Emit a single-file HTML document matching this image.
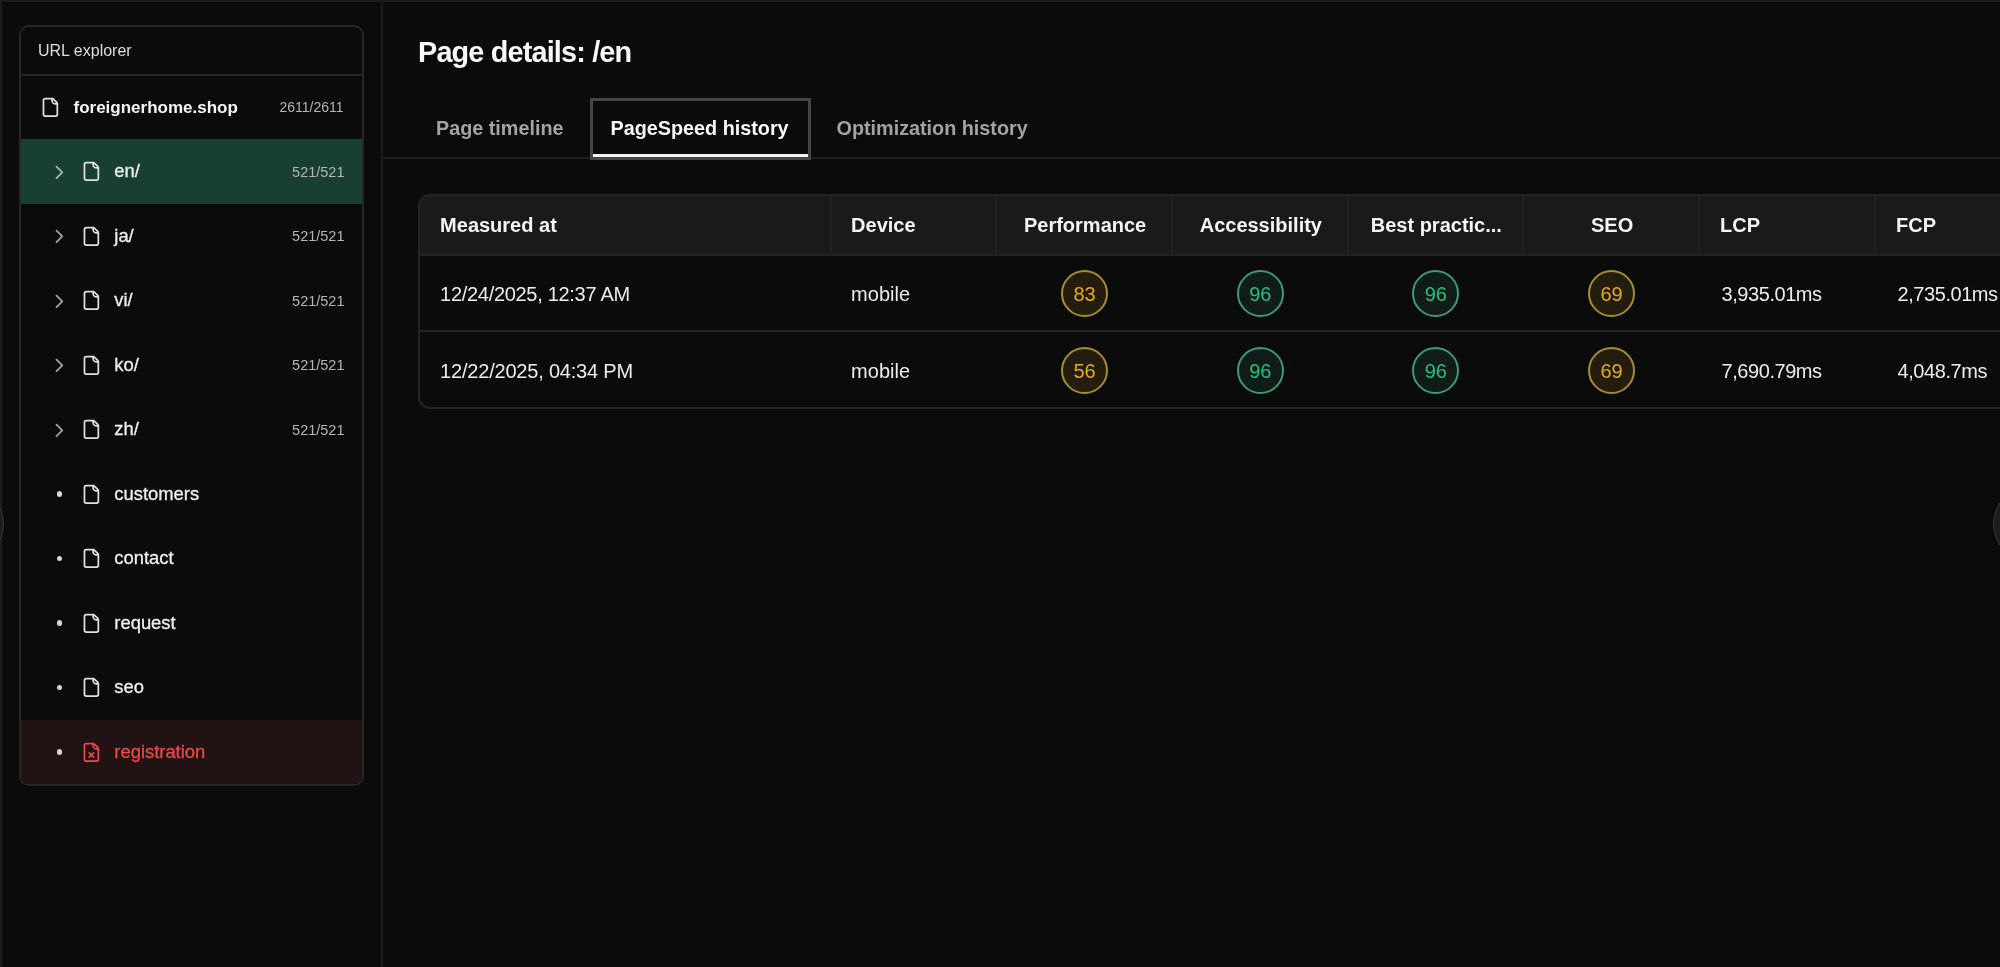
<!DOCTYPE html><html><head><meta charset="utf-8"><style>*{box-sizing:border-box;margin:0;padding:0}
html,body{width:2000px;height:967px;overflow:hidden;background:#0b0b0b}
body{position:relative;font-family:"Liberation Sans",sans-serif;color:#f2f2f2}
.abs{position:absolute}
.bt{left:0;top:0;width:2000px;height:2px;background:#1c1c1c}
.bl{left:0;top:0;width:2px;height:967px;background:#1c1c1c}
.sd{left:381px;top:0;width:2px;height:967px;background:#1c1c1c}
.panel{left:19px;top:25px;width:345px;height:761px;border:2px solid #232323;border-radius:10px;overflow:hidden}
.ph{position:absolute;left:0;top:0;width:100%;height:49px;border-bottom:2px solid #232323}
.ph span{position:absolute;left:17px;top:15.3px;font-size:16px;line-height:18px;color:#dedede}
.row{position:absolute;left:0;width:100%;height:64.5px}
.root{top:49px;height:63px}
.row .chev{position:absolute;left:26.5px;top:50%;margin-top:-10.6px;width:22.8px;height:22.8px}
.row .dot{position:absolute;left:35.7px;top:50%;margin-top:-2.7px;width:5.4px;height:5.4px;border-radius:50%;background:#d6d6d6}
.row .ic{position:absolute;left:60px;top:50%;margin-top:-10px;width:20.8px;height:20.8px}
.root .ic{left:19px;margin-top:-11px}
.row .lb{position:absolute;left:93.3px;top:50%;margin-top:-10.9px;font-size:18.4px;-webkit-text-stroke:0.3px currentColor;line-height:22px;color:#f0f0f0;white-space:nowrap}
.root .lb{left:52.5px;margin-top:-10.5px;font-size:17px;font-weight:700;color:#f7f7f7;-webkit-text-stroke:0}
.row .ct{position:absolute;right:17.5px;top:50%;margin-top:-8.8px;font-size:14.5px;line-height:18px;color:#b4b4b4}
.green{background:#183f2f}
.red{background:#211314}
.red .lb{color:#ea4848}
h1{position:absolute;left:418px;top:35.5px;font-size:28.8px;line-height:32px;font-weight:700;color:#fafafa;letter-spacing:-0.82px;white-space:nowrap}
.tabline{left:383px;top:157px;width:1617px;height:1.6px;background:#1f1f1f}
.tab{position:absolute;top:117px;font-size:19.8px;line-height:22px;font-weight:700;color:#a3a3a3;white-space:nowrap}
.tab.act{color:#fafafa}
.tabbox{left:590px;top:98.3px;width:220.5px;height:61.7px;border:3px solid #464646}
.tabul{left:593px;top:153.8px;width:214.5px;height:3.6px;background:#f5f5f5}
.tbl{left:418px;top:194px;width:1700px;height:215px;border:2px solid #242424;border-radius:12px;overflow:hidden}
.th{position:absolute;left:0;top:0;width:100%;height:60px;background:#1a1a1a;border-bottom:2px solid #242424}
.vl{position:absolute;top:0;width:2px;height:58px;background:#222}
.hc{position:absolute;top:18.1px;font-size:20px;line-height:22px;font-weight:700;color:#f5f5f5;white-space:nowrap}
.rl{position:absolute;left:0;width:100%;height:2px;background:#242424}
.cell{position:absolute;font-size:20px;line-height:22px;color:#ececec;white-space:nowrap}
.sc{position:absolute;width:47px;height:47px;border-radius:50%;border:2.2px solid;font-size:20px;line-height:44px;text-align:center}
.y{border-color:#a38e2c;background:#241d0d;color:#e3ab12}
.g{border-color:#3d9a77;background:#0f1c17;color:#22bf84}
.circ{width:76px;height:76px;border-radius:50%;background:#1c1d21;border:1.5px solid #3a3a3a;top:486px}

.root .ct{font-size:14px;right:18.5px;margin-top:-9.3px}
.panel{border-color:#262626}
.ph{border-bottom-color:#262626}

#wrap{position:absolute;left:0;top:0;width:2000px;height:967px;overflow:hidden;will-change:transform}

</style></head><body><div id="wrap">
<div class="abs bt"></div><div class="abs bl"></div><div class="abs sd"></div>
<div class="abs circ" style="left:-72px"></div><div class="abs circ" style="left:1993px"></div>
<div class="abs panel"><div class="ph"><span>URL explorer</span></div>
<div class="row root"><svg class="ic"  viewBox="0 0 24 24" fill="none" stroke="#e2e2e2" stroke-width="2" stroke-linecap="round" stroke-linejoin="round"><path d="M6 22a2 2 0 0 1-2-2V4a2 2 0 0 1 2-2h8a2.4 2.4 0 0 1 1.704.706l3.588 3.588A2.4 2.4 0 0 1 20 8v12a2 2 0 0 1-2 2z"/><path d="M14 2v2a4 4 0 0 0 4 4h2"/></svg><span class="lb">foreignerhome.shop</span><span class="ct">2611/2611</span></div>
<div class="row green" style="top:112.1px"><svg class="chev"  viewBox="0 0 24 24" fill="none" stroke="#a9b2ae" stroke-width="2" stroke-linecap="round" stroke-linejoin="round"><path d="m9 18 6-6-6-6"/></svg><svg class="ic"  viewBox="0 0 24 24" fill="none" stroke="#e2e2e2" stroke-width="2" stroke-linecap="round" stroke-linejoin="round"><path d="M6 22a2 2 0 0 1-2-2V4a2 2 0 0 1 2-2h8a2.4 2.4 0 0 1 1.704.706l3.588 3.588A2.4 2.4 0 0 1 20 8v12a2 2 0 0 1-2 2z"/><path d="M14 2v2a4 4 0 0 0 4 4h2"/></svg><span class="lb">en/</span><span class="ct">521/521</span></div>
<div class="row " style="top:176.6px"><svg class="chev"  viewBox="0 0 24 24" fill="none" stroke="#a0a0a0" stroke-width="2" stroke-linecap="round" stroke-linejoin="round"><path d="m9 18 6-6-6-6"/></svg><svg class="ic"  viewBox="0 0 24 24" fill="none" stroke="#e2e2e2" stroke-width="2" stroke-linecap="round" stroke-linejoin="round"><path d="M6 22a2 2 0 0 1-2-2V4a2 2 0 0 1 2-2h8a2.4 2.4 0 0 1 1.704.706l3.588 3.588A2.4 2.4 0 0 1 20 8v12a2 2 0 0 1-2 2z"/><path d="M14 2v2a4 4 0 0 0 4 4h2"/></svg><span class="lb">ja/</span><span class="ct">521/521</span></div>
<div class="row " style="top:241.1px"><svg class="chev"  viewBox="0 0 24 24" fill="none" stroke="#a0a0a0" stroke-width="2" stroke-linecap="round" stroke-linejoin="round"><path d="m9 18 6-6-6-6"/></svg><svg class="ic"  viewBox="0 0 24 24" fill="none" stroke="#e2e2e2" stroke-width="2" stroke-linecap="round" stroke-linejoin="round"><path d="M6 22a2 2 0 0 1-2-2V4a2 2 0 0 1 2-2h8a2.4 2.4 0 0 1 1.704.706l3.588 3.588A2.4 2.4 0 0 1 20 8v12a2 2 0 0 1-2 2z"/><path d="M14 2v2a4 4 0 0 0 4 4h2"/></svg><span class="lb">vi/</span><span class="ct">521/521</span></div>
<div class="row " style="top:305.6px"><svg class="chev"  viewBox="0 0 24 24" fill="none" stroke="#a0a0a0" stroke-width="2" stroke-linecap="round" stroke-linejoin="round"><path d="m9 18 6-6-6-6"/></svg><svg class="ic"  viewBox="0 0 24 24" fill="none" stroke="#e2e2e2" stroke-width="2" stroke-linecap="round" stroke-linejoin="round"><path d="M6 22a2 2 0 0 1-2-2V4a2 2 0 0 1 2-2h8a2.4 2.4 0 0 1 1.704.706l3.588 3.588A2.4 2.4 0 0 1 20 8v12a2 2 0 0 1-2 2z"/><path d="M14 2v2a4 4 0 0 0 4 4h2"/></svg><span class="lb">ko/</span><span class="ct">521/521</span></div>
<div class="row " style="top:370.1px"><svg class="chev"  viewBox="0 0 24 24" fill="none" stroke="#a0a0a0" stroke-width="2" stroke-linecap="round" stroke-linejoin="round"><path d="m9 18 6-6-6-6"/></svg><svg class="ic"  viewBox="0 0 24 24" fill="none" stroke="#e2e2e2" stroke-width="2" stroke-linecap="round" stroke-linejoin="round"><path d="M6 22a2 2 0 0 1-2-2V4a2 2 0 0 1 2-2h8a2.4 2.4 0 0 1 1.704.706l3.588 3.588A2.4 2.4 0 0 1 20 8v12a2 2 0 0 1-2 2z"/><path d="M14 2v2a4 4 0 0 0 4 4h2"/></svg><span class="lb">zh/</span><span class="ct">521/521</span></div>
<div class="row " style="top:434.6px"><span class="dot"></span><svg class="ic"  viewBox="0 0 24 24" fill="none" stroke="#e2e2e2" stroke-width="2" stroke-linecap="round" stroke-linejoin="round"><path d="M6 22a2 2 0 0 1-2-2V4a2 2 0 0 1 2-2h8a2.4 2.4 0 0 1 1.704.706l3.588 3.588A2.4 2.4 0 0 1 20 8v12a2 2 0 0 1-2 2z"/><path d="M14 2v2a4 4 0 0 0 4 4h2"/></svg><span class="lb">customers</span></div>
<div class="row " style="top:499.1px"><span class="dot"></span><svg class="ic"  viewBox="0 0 24 24" fill="none" stroke="#e2e2e2" stroke-width="2" stroke-linecap="round" stroke-linejoin="round"><path d="M6 22a2 2 0 0 1-2-2V4a2 2 0 0 1 2-2h8a2.4 2.4 0 0 1 1.704.706l3.588 3.588A2.4 2.4 0 0 1 20 8v12a2 2 0 0 1-2 2z"/><path d="M14 2v2a4 4 0 0 0 4 4h2"/></svg><span class="lb">contact</span></div>
<div class="row " style="top:563.6px"><span class="dot"></span><svg class="ic"  viewBox="0 0 24 24" fill="none" stroke="#e2e2e2" stroke-width="2" stroke-linecap="round" stroke-linejoin="round"><path d="M6 22a2 2 0 0 1-2-2V4a2 2 0 0 1 2-2h8a2.4 2.4 0 0 1 1.704.706l3.588 3.588A2.4 2.4 0 0 1 20 8v12a2 2 0 0 1-2 2z"/><path d="M14 2v2a4 4 0 0 0 4 4h2"/></svg><span class="lb">request</span></div>
<div class="row " style="top:628.1px"><span class="dot"></span><svg class="ic"  viewBox="0 0 24 24" fill="none" stroke="#e2e2e2" stroke-width="2" stroke-linecap="round" stroke-linejoin="round"><path d="M6 22a2 2 0 0 1-2-2V4a2 2 0 0 1 2-2h8a2.4 2.4 0 0 1 1.704.706l3.588 3.588A2.4 2.4 0 0 1 20 8v12a2 2 0 0 1-2 2z"/><path d="M14 2v2a4 4 0 0 0 4 4h2"/></svg><span class="lb">seo</span></div>
<div class="row red" style="top:692.6px"><span class="dot"></span><svg class="ic"  viewBox="0 0 24 24" fill="none" stroke="#ea4848" stroke-width="2" stroke-linecap="round" stroke-linejoin="round"><path d="M6 22a2 2 0 0 1-2-2V4a2 2 0 0 1 2-2h8a2.4 2.4 0 0 1 1.704.706l3.588 3.588A2.4 2.4 0 0 1 20 8v12a2 2 0 0 1-2 2z"/><path d="M14 2v2a4 4 0 0 0 4 4h2"/><path d="m14.5 12.5-5 5"/><path d="m9.5 12.5 5 5"/></svg><span class="lb">registration</span></div>
</div>
<h1>Page details: /en</h1><div class="abs tabline"></div>
<span class="tab" style="left:436px">Page timeline</span><div class="abs tabbox"></div><div class="abs tabul"></div>
<span class="tab act" style="left:610.5px">PageSpeed history</span><span class="tab" style="left:836.5px">Optimization history</span>
<div class="abs tbl"><div class="th"></div>
<div class="vl" style="left:410px"></div>
<div class="vl" style="left:575px"></div>
<div class="vl" style="left:751px"></div>
<div class="vl" style="left:926.5px"></div>
<div class="vl" style="left:1102px"></div>
<div class="vl" style="left:1278px"></div>
<div class="vl" style="left:1454px"></div>
<span class="hc" style="left:20.10px">Measured at</span>
<span class="hc" style="left:431.10px">Device</span>
<span class="hc" style="left:577.10px;width:176px;text-align:center">Performance</span>
<span class="hc" style="left:753.10px;width:175.5px;text-align:center">Accessibility</span>
<span class="hc" style="left:928.60px;width:175.5px;text-align:center">Best practic...</span>
<span class="hc" style="left:1104.10px;width:176px;text-align:center">SEO</span>
<span class="hc" style="left:1300.10px">LCP</span>
<span class="hc" style="left:1476.10px">FCP</span>
<div class="rl" style="top:134px"></div>
<span class="cell" style="left:20.10px;top:87.40px;letter-spacing:-0.3px">12/24/2025, 12:37 AM</span>
<span class="cell" style="left:431.10px;top:87.40px;letter-spacing:0">mobile</span>
<div class="sc y" style="left:641.00px;top:74.40px">83</div>
<div class="sc g" style="left:816.75px;top:74.40px">96</div>
<div class="sc g" style="left:992.25px;top:74.40px">96</div>
<div class="sc y" style="left:1168.00px;top:74.40px">69</div>
<span class="cell" style="left:1301.60px;top:87.40px;letter-spacing:-0.45px">3,935.01ms</span>
<span class="cell" style="left:1477.60px;top:87.40px;letter-spacing:-0.45px">2,735.01ms</span>
<span class="cell" style="left:20.10px;top:163.80px;letter-spacing:-0.2px">12/22/2025, 04:34 PM</span>
<span class="cell" style="left:431.10px;top:163.80px;letter-spacing:0">mobile</span>
<div class="sc y" style="left:641.00px;top:150.80px">56</div>
<div class="sc g" style="left:816.75px;top:150.80px">96</div>
<div class="sc g" style="left:992.25px;top:150.80px">96</div>
<div class="sc y" style="left:1168.00px;top:150.80px">69</div>
<span class="cell" style="left:1301.60px;top:163.80px;letter-spacing:-0.45px">7,690.79ms</span>
<span class="cell" style="left:1477.60px;top:163.80px;letter-spacing:-0.45px">4,048.7ms</span>
</div>
</div></body></html>
